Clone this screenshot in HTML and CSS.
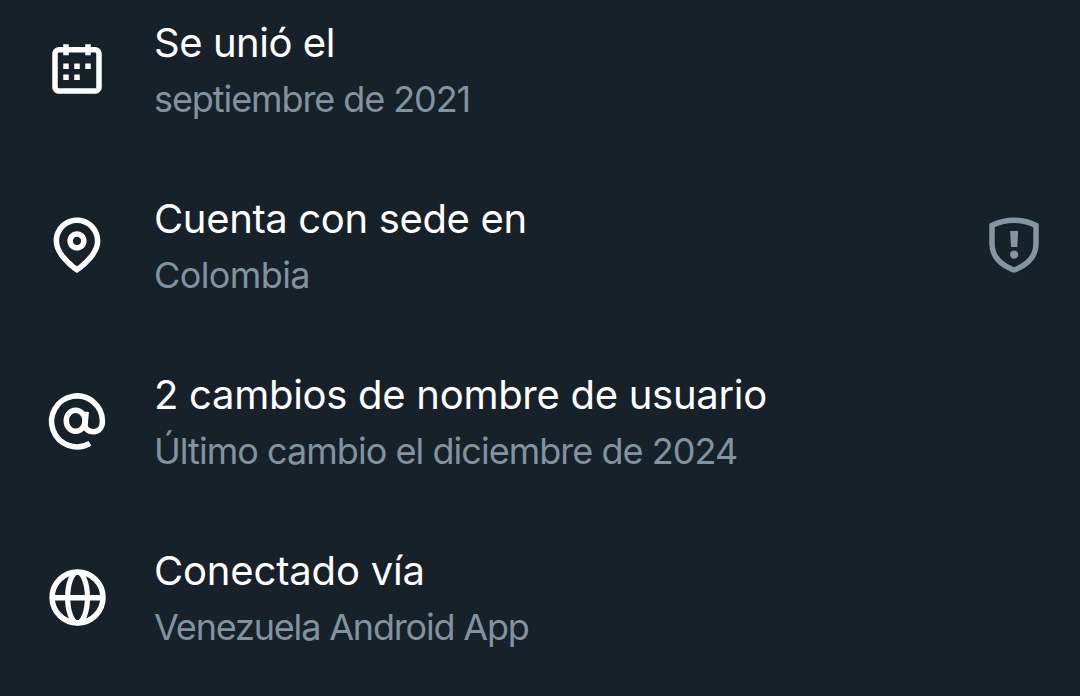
FILE: index.html
```html
<!DOCTYPE html>
<html lang="es">
<head>
  <meta charset="UTF-8">
  <title>Información de la cuenta</title>
  <link rel="stylesheet" href="styles.css">
</head>
<body>
  <ul class="info-list">
    <li class="row">
      <svg class="icon" viewBox="0 0 24 24"><path d="M7 4V3h2v1h6V3h2v1h1.5C19.89 4 21 5.12 21 6.5v12c0 1.38-1.11 2.5-2.5 2.5h-13C4.12 21 3 19.88 3 18.5v-12C3 5.12 4.12 4 5.5 4H7zm0 2H5.5c-.27 0-.5.22-.5.5v12c0 .28.23.5.5.5h13c.28 0 .5-.22.5-.5v-12c0-.28-.22-.5-.5-.5H17v1h-2V6H9v1H7V6zm0 6h2v-2H7v2zm0 4h2v-2H7v2zm4-4h2v-2h-2v2zm0 4h2v-2h-2v2zm4-4h2v-2h-2v2z"/></svg>
      <div class="text">
        <div class="title joined">Se unió el</div>
        <div class="detail joined-date">septiembre de 2021</div>
      </div>
    </li>
    <li class="row">
      <svg class="icon" viewBox="0 0 24 24"><path d="M12 7c-1.93 0-3.5 1.57-3.5 3.5S10.07 14 12 14s3.5-1.57 3.5-3.5S13.93 7 12 7zm0 5c-.827 0-1.5-.673-1.5-1.5S11.173 9 12 9s1.5.673 1.5 1.5S12.827 12 12 12zm0-10c-4.687 0-8.5 3.813-8.5 8.5 0 5.967 7.621 11.116 7.945 11.332l.555.37.555-.37c.324-.216 7.945-5.365 7.945-11.332C20.5 5.813 16.687 2 12 2zm0 17.77c-1.665-1.241-6.5-5.196-6.5-9.27C5.5 6.916 8.416 4 12 4s6.5 2.916 6.5 6.5c0 4.073-4.835 8.028-6.5 9.27z"/></svg>
      <div class="text">
        <div class="title based">Cuenta con sede en</div>
        <div class="detail country">Colombia</div>
      </div>
      <svg class="icon shield" viewBox="0 0 24 24">
        <path class="line" d="M12 3C9 3 6.3 3.7 4 4.9v6.6c0 5 3.2 7.6 7.2 9.3q.8.4 1.6 0c4-1.7 7.2-4.3 7.2-9.3V4.9C17.7 3.7 15 3 12 3z"/>
        <path d="M10.6 6.9h2.9l-.3 5.8h-2.3z"/>
        <circle cx="12.05" cy="15.5" r="1.5"/>
      </svg>
    </li>
    <li class="row">
      <svg class="icon" viewBox="0 0 24 24">
        <path class="line" d="M16.7 20.1A9.25 9.25 0 1 1 21.25 12.1c0 2.3-1.4 3.8-3.3 3.8-2 0-3.2-1.1-3-3l.4-4.3"/>
        <ellipse class="line" cx="11.5" cy="11.9" rx="3.4" ry="3.85"/>
      </svg>
      <div class="text">
        <div class="title changes">2 cambios de nombre de usuario</div>
        <div class="detail last-change">Último cambio el diciembre de 2024</div>
      </div>
    </li>
    <li class="row">
      <svg class="icon" viewBox="0 0 24 24">
        <circle class="line" cx="12.2" cy="12.2" r="9.25"/>
        <ellipse class="line thin" cx="12.2" cy="12.2" rx="3.6" ry="9.2"/>
        <path class="line" d="M3 12.3h18"/>
      </svg>
      <div class="text">
        <div class="title connected">Conectado vía</div>
        <div class="detail app">Venezuela Android App</div>
      </div>
    </li>
  </ul>
</body>
</html>
```
FILE: styles.css
```css
body {
  margin: 0;
  height: 696px;
  overflow: hidden;
  background: #17212a;
  color: #fff;
  font-family: Inter, "Liberation Sans", sans-serif;
}
.info-list {
  list-style: none;
  margin: 0;
  padding: 0;
}
.row {
  display: flex;
  height: 176px;
  padding: 0 33px 0 44px;
}
.icon {
  width: 66px;
  height: 66px;
  margin-top: 36px;
  flex: none;
  fill: currentColor;
}
.line {
  fill: none;
  stroke: currentColor;
  stroke-width: 2;
}
.thin {
  stroke-width: 1.9;
}
.shield {
  color: #8496a2;
}
.text {
  flex: 1;
  margin-left: 44px;
  padding-top: 18px;
  white-space: nowrap;
}
.title {
  font-size: 40px;
  line-height: 50px;
}
.detail {
  margin-top: 9px;
  font-size: 36px;
  line-height: 44px;
  color: #8293a0;
}

/* tracking */
.joined {
  letter-spacing: -0.45px;
}
.joined-date {
  letter-spacing: -1.08px;
}
.based {
  letter-spacing: -0.35px;
}
.country {
  letter-spacing: -0.6px;
}
.changes {
  letter-spacing: -0.28px;
}
.last-change {
  letter-spacing: -0.96px;
}
.connected {
  letter-spacing: -0.17px;
}
.app {
  letter-spacing: -1.18px;
}
```
